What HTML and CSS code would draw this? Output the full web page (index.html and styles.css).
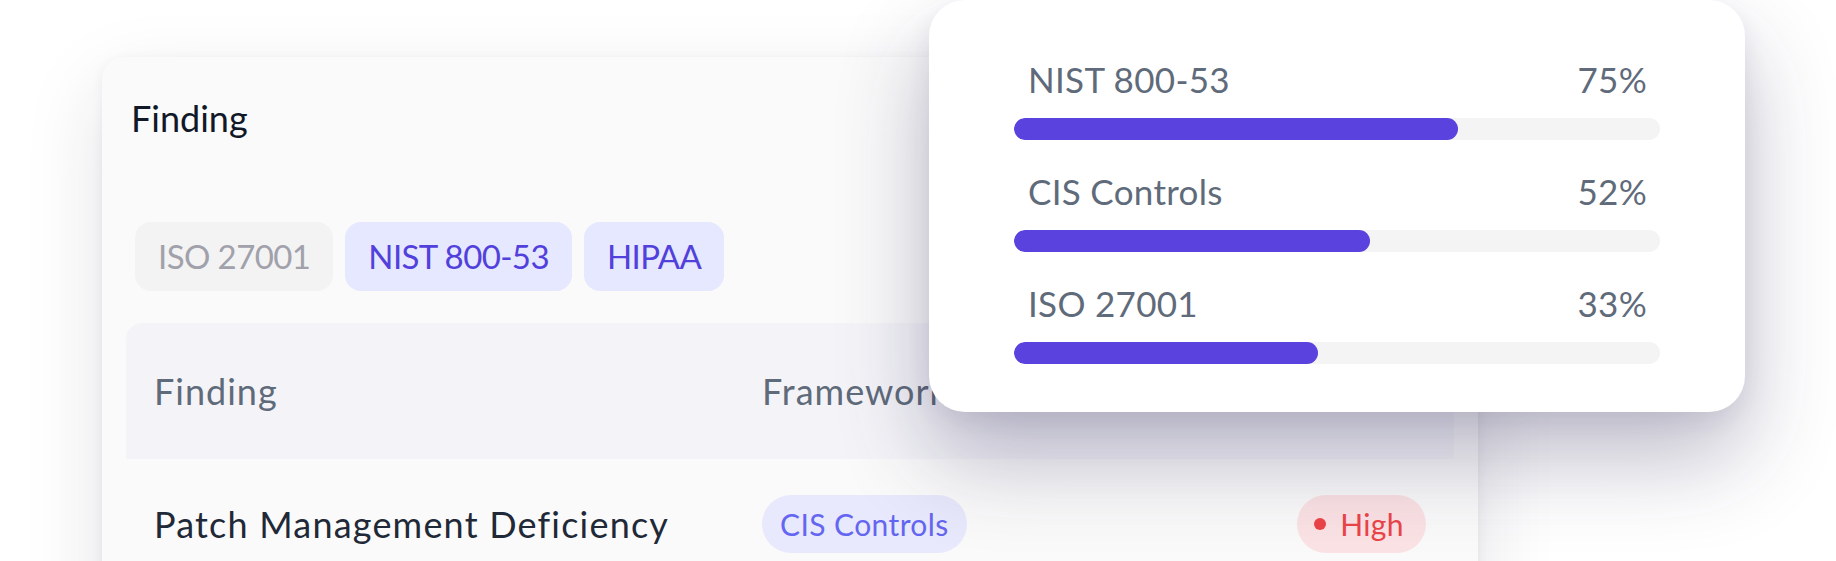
FILE: index.html
```html
<!DOCTYPE html>
<html lang="en">
<head>
<meta charset="utf-8">
<title>Compliance findings</title>
<link rel="stylesheet" href="styles.css">
</head>
<body>
<div class="stage">
  <section class="findings">
    <h2 class="findings-title">Finding</h2>
    <div class="filter-chips">
      <span class="chip chip-muted">ISO 27001</span>
      <span class="chip chip-active">NIST 800-53</span>
      <span class="chip chip-active">HIPAA</span>
    </div>
    <div class="table">
      <div class="table-head">
        <div>Finding</div>
        <div>Framework</div>
        <div class="col-end">Severity</div>
      </div>
      <div class="table-row">
        <div class="cell-title">Patch Management Deficiency</div>
        <div><span class="pill pill-framework">CIS Controls</span></div>
        <div class="col-end"><span class="pill pill-high"><span class="dot"></span>High</span></div>
      </div>
    </div>
  </section>

  <aside class="coverage">
    <div class="coverage-item">
      <div class="coverage-label"><span>NIST 800-53</span><span>75%</span></div>
      <div class="track"><div class="fill" style="width: 68.7%"></div></div>
    </div>
    <div class="coverage-item">
      <div class="coverage-label"><span>CIS Controls</span><span>52%</span></div>
      <div class="track"><div class="fill" style="width: 55.1%"></div></div>
    </div>
    <div class="coverage-item">
      <div class="coverage-label"><span>ISO 27001</span><span>33%</span></div>
      <div class="track"><div class="fill" style="width: 47.1%"></div></div>
    </div>
  </aside>
</div>
</body>
</html>
```

FILE: styles.css
```css
* {
  box-sizing: border-box;
}

html, body {
  margin: 0;
  padding: 0;
  background: #ffffff;
}

body {
  font-family: Lato, "Noto Sans", "DejaVu Sans", sans-serif;
  width: 1836px;
  height: 561px;
  overflow: hidden;
}

.stage {
  position: relative;
  width: 1836px;
  height: 561px;
  overflow: hidden;
  padding: 57px 0 0 102px;
}

/* Back card */
.findings {
  width: 1376px;
  min-height: 640px;
  background: #fafafa;
  border-radius: 22px;
  padding: 41px 24px 0;
  box-shadow: 0 30px 80px rgba(30, 30, 60, 0.13), 0 2px 12px rgba(30, 30, 60, 0.05);
}

.findings-title {
  margin: 0;
  padding-left: 5px;
  font-size: 36px;
  line-height: 40px;
  font-weight: 400;
  color: #111827;
}

.filter-chips {
  display: flex;
  gap: 12px;
  margin-top: 84px;
  padding-left: 9px;
}

.chip {
  display: inline-block;
  height: 69px;
  line-height: 69px;
  padding: 0 23px;
  border-radius: 16px;
  font-size: 33px;
  letter-spacing: -0.6px;
}

.chip-muted {
  background: #f3f3f4;
  color: #a1a1ab;
}

.chip-active {
  background: #e5e8fe;
  color: #5240dc;
}

.table {
  margin-top: 32px;
}

.table-head,
.table-row {
  display: grid;
  grid-template-columns: 608px 1fr auto;
  align-items: center;
  padding: 0 28px;
}

.table-head {
  height: 136px;
  background: #f4f4f8;
  border-radius: 16px 16px 0 0;
  font-size: 36px;
  letter-spacing: 1px;
  color: #5f6b7a;
}

.table-row {
  padding-top: 36px;
  padding-bottom: 36px;
}

.col-end {
  justify-self: end;
}

.cell-title {
  font-size: 36px;
  letter-spacing: 1.2px;
  color: #1f2937;
}

.pill {
  display: inline-flex;
  align-items: center;
  height: 58px;
  border-radius: 29px;
  padding: 0 18px;
  font-size: 30px;
  letter-spacing: 0.4px;
}

.pill-framework {
  background: #e8e9fc;
  color: #6466f1;
}

.pill-high {
  background: #fbe2e4;
  color: #ec4448;
  gap: 14px;
  padding: 0 22px 0 17px;
}

.dot {
  width: 12px;
  height: 12px;
  border-radius: 50%;
  background: #ec4448;
}

/* Floating coverage popup */
.coverage {
  position: absolute;
  left: 929px;
  top: 0;
  width: 816px;
  height: 412px;
  padding: 59px 85px 0;
  background: #ffffff;
  border-radius: 36px;
  box-shadow: 0 46px 90px rgba(40, 34, 80, 0.30), 0 8px 24px rgba(40, 34, 80, 0.07);
  display: flex;
  flex-direction: column;
  gap: 31px;
}

.coverage-item {
  display: flex;
  flex-direction: column;
  gap: 19px;
}

.coverage-label {
  display: flex;
  justify-content: space-between;
  padding: 0 13px 0 14px;
  font-size: 35px;
  line-height: 40px;
  letter-spacing: 0.3px;
  color: #5f6b7a;
}

.track {
  height: 22px;
  border-radius: 11px;
  background: #f4f4f5;
  overflow: hidden;
}

.fill {
  height: 100%;
  border-radius: 11px;
  background: #5a42de;
}
```
